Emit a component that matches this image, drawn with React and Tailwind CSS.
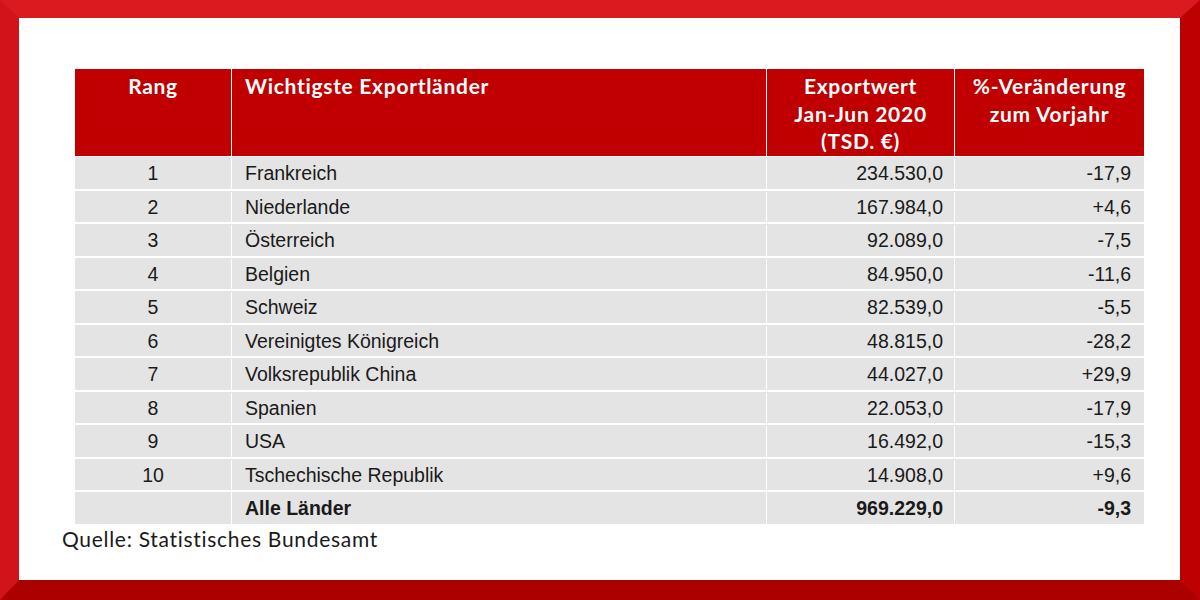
const rows = [
  ['1', 'Frankreich', '234.530,0', '-17,9'],
  ['2', 'Niederlande', '167.984,0', '+4,6'],
  ['3', 'Österreich', '92.089,0', '-7,5'],
  ['4', 'Belgien', '84.950,0', '-11,6'],
  ['5', 'Schweiz', '82.539,0', '-5,5'],
  ['6', 'Vereinigtes Königreich', '48.815,0', '-28,2'],
  ['7', 'Volksrepublik China', '44.027,0', '+29,9'],
  ['8', 'Spanien', '22.053,0', '-17,9'],
  ['9', 'USA', '16.492,0', '-15,3'],
  ['10', 'Tschechische Republik', '14.908,0', '+9,6'],
];

const cols = 'grid grid-cols-[156px_534px_187px_189px] gap-x-[1px]';

export default function App() {
  return (
    <div className="w-[1200px] h-[600px] border-t-[18px] border-l-[19px] border-r-[20px] border-b-[20px] border-t-[#da1a1e] border-l-[#d2141a] border-r-[#bd0000] border-b-[#aa0000] bg-white">
      <div className="pt-[51px] pl-[56px] flex flex-col">
        <div className="w-[1069px] bg-white">
          <div className={`${cols} h-[87px] font-['Lato',sans-serif] font-bold text-white text-[21px] tracking-[0.7px] leading-[27.5px]`}>
            <div className="bg-[#c00000] text-center pt-[3px]">Rang</div>
            <div className="bg-[#c00000] pl-[13px] pt-[3px]">Wichtigste Exportländer</div>
            <div className="bg-[#c00000] text-center pt-[3px]">
              Exportwert<br />Jan-Jun 2020<br />(TSD. €)
            </div>
            <div className="bg-[#c00000] text-center pt-[3px]">
              %-Veränderung<br />zum Vorjahr
            </div>
          </div>
          <div className="flex flex-col gap-y-[2px] pt-[1px] font-['Liberation_Sans',Arial,sans-serif] text-[19.5px] text-[#1a1a1a]">
            {rows.map((r, i) => (
              <div
                key={r[0]}
                className={`${cols} pt-[1px] bg-[#e4e4e4] ${i % 2 ? 'leading-[30px]' : 'leading-[31px]'}`}
              >
                <div className="text-center">{r[0]}</div>
                <div className="pl-[13px] border-l border-white -ml-[1px]">{r[1]}</div>
                <div className="text-right pr-[11px] border-l border-white -ml-[1px]">{r[2]}</div>
                <div className="text-right pr-[13px] border-l border-white -ml-[1px]">{r[3]}</div>
              </div>
            ))}
            <div className={`${cols} bg-[#e4e4e4] leading-[32px] font-bold`}>
              <div></div>
              <div className="pl-[13px] border-l border-white -ml-[1px]">Alle Länder</div>
              <div className="text-right pr-[11px] border-l border-white -ml-[1px]">969.229,0</div>
              <div className="text-right pr-[13px] border-l border-white -ml-[1px]">-9,3</div>
            </div>
          </div>
        </div>
        <p className="-ml-[13px] font-['Lato',sans-serif] text-[21px] tracking-[0.7px] leading-[30px] text-[#1a1a1a]">
          Quelle: Statistisches Bundesamt
        </p>
      </div>
    </div>
  );
}
